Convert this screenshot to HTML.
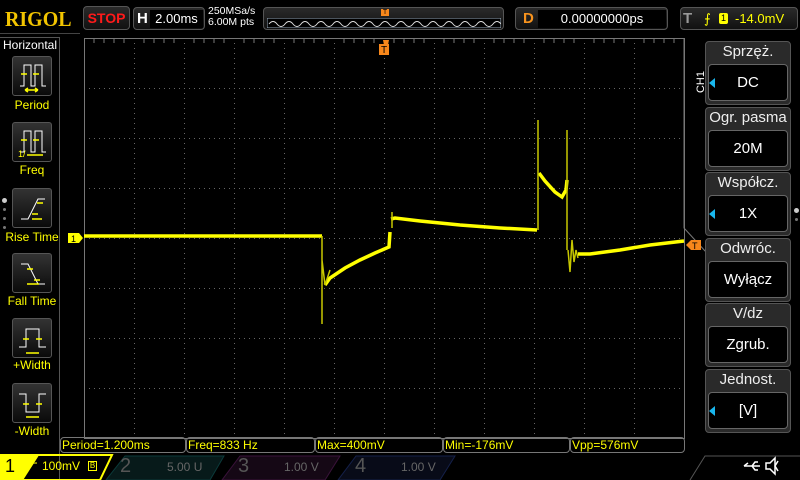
<!DOCTYPE html>
<html><head><meta charset="utf-8"><style>
*{margin:0;padding:0;box-sizing:border-box}
body{width:800px;height:480px;background:#000;position:relative;overflow:hidden;font-family:"Liberation Sans",sans-serif;color:#fff}
.a{position:absolute}
.box{position:absolute;border:1px solid #555;border-radius:4px;background:linear-gradient(#2a2a2a,#111)}
.lbl{position:absolute;color:#ffff00;font-size:12px;text-align:center;width:64px;left:0}
.ico{position:absolute;left:12px;width:40px;height:40px;border:1px solid #555;border-radius:3px;background:linear-gradient(#333,#0a0a0a)}
.mb{position:absolute;left:705px;width:86px;height:64px;border:1px solid #555;border-radius:4px;background:#2a2a2a}
.mb .t{position:absolute;top:1px;width:100%;text-align:center;font-size:15px;color:#eee}
.mb .v{position:absolute;left:2px;right:2px;top:22px;bottom:3px;border:1px solid #666;border-radius:4px;background:#000;text-align:center;font-size:15px;line-height:36px}
.mb .ar{position:absolute;left:3px;top:15px;width:0;height:0;border-top:5px solid transparent;border-bottom:5px solid transparent;border-right:6px solid #19b7ee}
.ms{position:absolute;top:437px;height:16px;border:1px solid #777;border-radius:4px;color:#ffff00;font-size:12px;line-height:14px;padding-left:1px}
</style></head><body>
<div class="a" style="left:5px;top:7px;font-family:'Liberation Serif',serif;font-weight:bold;font-size:21px;color:#f2c400;transform:scaleX(0.95);transform-origin:left">RIGOL</div>
<div class="box" style="left:83px;top:6px;width:47px;height:24px;color:#ff1a1a;font-weight:bold;font-size:14px;text-align:center;line-height:22px">STOP</div>
<div class="box" style="left:133px;top:7px;width:72px;height:23px"><span class="a" style="left:3px;top:2px;font-weight:bold;font-size:15px">H</span><div class="a" style="left:16px;top:2px;width:53px;height:18px;background:#000;font-size:13px;text-align:center;line-height:18px">2.00ms</div></div>
<div class="a" style="left:208px;top:6px;font-size:10.5px;line-height:11px">250MSa/s<br>6.00M pts</div>
<div class="box" style="left:263px;top:7px;width:241px;height:23px"><svg class="a" style="left:3px;top:10px" width="234" height="10"><rect x="0" y="0" width="234" height="10" fill="#000" stroke="#99aabb"/><path d="M2 6 q4 -5 8 0 t8 0 t8 0 t8 0 t8 0 t8 0 t8 0 t8 0 t8 0 t8 0 t8 0 t8 0 t8 0 t8 0 t8 0 t8 0 t8 0 t8 0 t8 0 t8 0 t8 0 t8 0 t8 0 t8 0 t8 0 t8 0 t8 0 t8 0 t8 0" stroke="#ddd" fill="none"/></svg><div class="a" style="left:117px;top:1px;width:8px;height:7px;background:#f7871b;font-size:7px;color:#000;text-align:center;line-height:7px">T</div></div>
<div class="box" style="left:515px;top:7px;width:153px;height:23px"><span class="a" style="left:7px;top:2px;font-weight:bold;font-size:15px;color:#f7931e">D</span><div class="a" style="left:22px;top:2px;width:128px;height:18px;background:#000;font-size:13px;text-align:center;line-height:18px">0.00000000ps</div></div>
<div class="box" style="left:680px;top:7px;width:118px;height:23px;font-size:13px;color:#ffff00;line-height:21px"><span class="a" style="left:2px;color:#999;font-weight:bold;font-size:15px">T</span><span class="a" style="left:23px">&#x2A0D;</span><span class="a" style="left:38px;top:5px;width:9px;height:11px;background:#ff0;color:#000;font-size:9px;line-height:11px;text-align:center;border-radius:2px">1</span><span class="a" style="left:54px">-14.0mV</span></div>
<div class="a" style="left:0;top:33px;width:80px;height:1px;background:#444"></div>
<div class="a" style="left:0;top:37px;width:60px;height:1px;background:#555"></div>
<div class="a" style="left:3px;top:38px;font-size:12px">Horizontal</div>
<div class="a" style="left:59px;top:38px;width:1px;height:442px;background:#555"></div>
<div class="ico" style="top:56px"><svg width="40" height="40"><path d="M7 29H11V8H18V29H22V8H29V29H33" stroke="#fff" fill="none"/><path d="M8 17h6M20 17h6" stroke="#ff0" stroke-width="1.5"/><path d="M12 33h13M12 33l3-2M12 33l3 2M25 33l-3-2M25 33l-3 2" stroke="#ff0" stroke-width="1.5"/></svg></div>
<div class="lbl" style="top:98px">Period</div>
<div class="ico" style="top:122px"><svg width="40" height="40"><path d="M7 29H11V8H18V29H22V8H29V29H33" stroke="#fff" fill="none"/><path d="M8 17h6M20 17h6" stroke="#ff0" stroke-width="1.5"/><path d="M14 32h16" stroke="#ff0" stroke-width="1.5"/><text x="5" y="34" fill="#ff0" font-size="9">1/</text></svg></div>
<div class="lbl" style="top:163px">Freq</div>
<div class="ico" style="top:188px"><svg width="40" height="40"><path d="M8 30H15L25 10H32" stroke="#fff" fill="none"/><path d="M19 25h6M24 14h6M19 30h10" stroke="#ff0" stroke-width="1.5"/></svg></div>
<div class="lbl" style="top:230px">Rise Time</div>
<div class="ico" style="top:253px"><svg width="40" height="40"><path d="M8 10H15L25 30H32" stroke="#fff" fill="none"/><path d="M14 15h6M21 26h6M14 30h12" stroke="#ff0" stroke-width="1.5"/></svg></div>
<div class="lbl" style="top:294px">Fall Time</div>
<div class="ico" style="top:318px"><svg width="40" height="40"><path d="M6 28H13V10H26V28H33" stroke="#fff" fill="none"/><path d="M10 20h6M23 20h6M13 34h13" stroke="#ff0" stroke-width="1.5"/></svg></div>
<div class="lbl" style="top:358px">+Width</div>
<div class="ico" style="top:383px"><svg width="40" height="40"><path d="M6 10H13V28H26V10H33" stroke="#fff" fill="none"/><path d="M10 20h6M23 20h6M13 33h13" stroke="#ff0" stroke-width="1.5"/></svg></div>
<div class="lbl" style="top:424px">-Width</div>
<div class="a" style="left:2px;top:198px;width:5px;height:5px;border-radius:50%;background:#ccc"></div>
<div class="a" style="left:3px;top:208px;width:3px;height:3px;border-radius:50%;background:#777"></div>
<div class="a" style="left:3px;top:217px;width:3px;height:3px;border-radius:50%;background:#777"></div>
<div class="a" style="left:3px;top:226px;width:3px;height:3px;border-radius:50%;background:#777"></div>

<svg class="a" style="left:0;top:0" width="800" height="480">
<g stroke="#666" stroke-width="1" stroke-dasharray="1,4" fill="none">
<path d="M134.5 38V438M184.5 38V438M234.5 38V438M284.5 38V438M334.5 38V438M434.5 38V438M484.5 38V438M534.5 38V438M584.5 38V438M634.5 38V438"/>
<path d="M84 88.5H684M84 138.5H684M84 188.5H684M84 288.5H684M84 338.5H684M84 388.5H684"/>
<path d="M384.5 38V438M84 238.5H684"/>
</g>
<rect x="84.5" y="38.5" width="600" height="400" fill="none" stroke="#777"/>
<g stroke="#777">
<path d="M94 39v4M104 39v4M114 39v4M124 39v4M144 39v4M154 39v4M164 39v4M174 39v4M194 39v4M204 39v4M214 39v4M224 39v4M244 39v4M254 39v4M264 39v4M274 39v4M294 39v4M304 39v4M314 39v4M324 39v4M344 39v4M354 39v4M364 39v4M374 39v4M394 39v4M404 39v4M414 39v4M424 39v4M444 39v4M454 39v4M464 39v4M474 39v4M494 39v4M504 39v4M514 39v4M524 39v4M544 39v4M554 39v4M564 39v4M574 39v4M594 39v4M604 39v4M614 39v4M624 39v4M644 39v4M654 39v4M664 39v4M674 39v4"/>
</g>
<path d="M684 38V228L706 252" stroke="#777" fill="none"/>
<g fill="none" stroke="#ffff00" stroke-width="3.5">
<path d="M84 236H322"/>
<path d="M325 285L330 278L345 268L360 260L375 253L389 247L390 232"/>
<path d="M391 219L395 218L420 221L460 225L500 228L537 230"/>
<path d="M539 173L545 181L555 192L562 197L566 190L567 180"/>
<path d="M578 254L590 254L620 250L650 245L684 241"/>
</g>
<g fill="none" stroke="#c8c800" stroke-width="1.5">
<path d="M322 236V324M322 260L325 285L330 270M392 212V228"/>
<path d="M538 230V120M538 175V200M567 130V250M568 250L570 272L572 240L574 262L576 250L578 258"/>
</g>
<path d="M383 40h6l-1 5h-4z" fill="#f7871b"/>
<rect x="379" y="44" width="10" height="11" fill="#f7871b"/><text x="381" y="53" font-size="10" fill="#000" font-family="Liberation Sans">T</text>
<path d="M68 233h11l4 5-4 5h-11z" fill="#ffff00"/><text x="71" y="242" font-size="9" fill="#000" font-family="Liberation Sans">1</text>
<path d="M686 245l5-5h10v10h-10z" fill="#f7871b"/><text x="692" y="249" font-size="9" fill="#000" font-family="Liberation Sans">T</text>
</svg>

<div class="a" style="left:690px;top:76px;transform:rotate(-90deg);font-size:11px;color:#fff">CH1</div>
<div class="mb" style="top:41px"><div class="t">Sprzęż.</div><div class="v">DC</div><div class="ar" style="top:36px"></div></div>
<div class="mb" style="top:107px"><div class="t">Ogr. pasma</div><div class="v">20M</div></div>
<div class="mb" style="top:172px"><div class="t">Współcz.</div><div class="v">1X</div><div class="ar" style="top:36px"></div></div>
<div class="mb" style="top:238px"><div class="t">Odwróc.</div><div class="v">Wyłącz</div></div>
<div class="mb" style="top:303px"><div class="t">V/dz</div><div class="v">Zgrub.</div></div>
<div class="mb" style="top:369px"><div class="t">Jednost.</div><div class="v">[V]</div><div class="ar" style="top:36px"></div></div>
<div class="a" style="left:794px;top:208px;width:5px;height:5px;border-radius:50%;background:#ccc"></div>
<div class="a" style="left:795px;top:218px;width:3px;height:3px;border-radius:50%;background:#777"></div>

<div class="ms" style="left:60px;width:126px">Period=1.200ms</div>
<div class="ms" style="left:186px;width:129px">Freq=833 Hz</div>
<div class="ms" style="left:315px;width:128px">Max=400mV</div>
<div class="ms" style="left:443px;width:127px">Min=-176mV</div>
<div class="ms" style="left:570px;width:115px">Vpp=576mV</div>

<svg class="a" style="left:0;top:454px" width="800" height="26">
<path d="M0 1H38L22 26H0z" fill="#ffff00"/>
<path d="M0 1H112L100 26H22z" fill="none" stroke="#ffff00" stroke-width="2"/>
<path d="M38 1L22 26" stroke="#ffff00" stroke-width="2"/>
<path d="M125 2H224L210 26H106z" fill="#071a1a" stroke="#0b3a3a"/>
<path d="M240 2H340L325 26H222z" fill="#150815" stroke="#3a123a"/>
<path d="M356 2H455L440 26H338z" fill="#080b18" stroke="#14204a"/>
<path d="M690 26L705 2H800" stroke="#555" fill="none"/>
<g stroke="#fff" fill="none" stroke-width="1.5"><path d="M744 12h16M744 12l4-3M752 12l3-4h3M752 12l3 4h3"/><path d="M766 9h4l5-5v16l-5-5h-4z"/><path d="M778 7l-3 5 3 5"/></g>
</svg>
<div class="a" style="left:5px;top:456px;font-size:18px;color:#000">1</div>
<div class="a" style="left:32px;top:460px;font-size:7px;color:#ff0">═</div>
<div class="a" style="left:42px;top:459px;font-size:12px;color:#ffff00">100mV</div>
<div class="a" style="left:88px;top:461px;width:9px;height:10px;border:1px solid #ff0;font-size:8px;color:#ff0;line-height:8px;text-align:center">B</div>
<div class="a" style="left:120px;top:455px;font-size:20px;color:#555">2</div>
<div class="a" style="left:167px;top:460px;font-size:12px;color:#666">5.00 U</div>
<div class="a" style="left:238px;top:455px;font-size:20px;color:#555">3</div>
<div class="a" style="left:284px;top:460px;font-size:12px;color:#666">1.00 V</div>
<div class="a" style="left:355px;top:455px;font-size:20px;color:#555">4</div>
<div class="a" style="left:401px;top:460px;font-size:12px;color:#666">1.00 V</div>
</body></html>
